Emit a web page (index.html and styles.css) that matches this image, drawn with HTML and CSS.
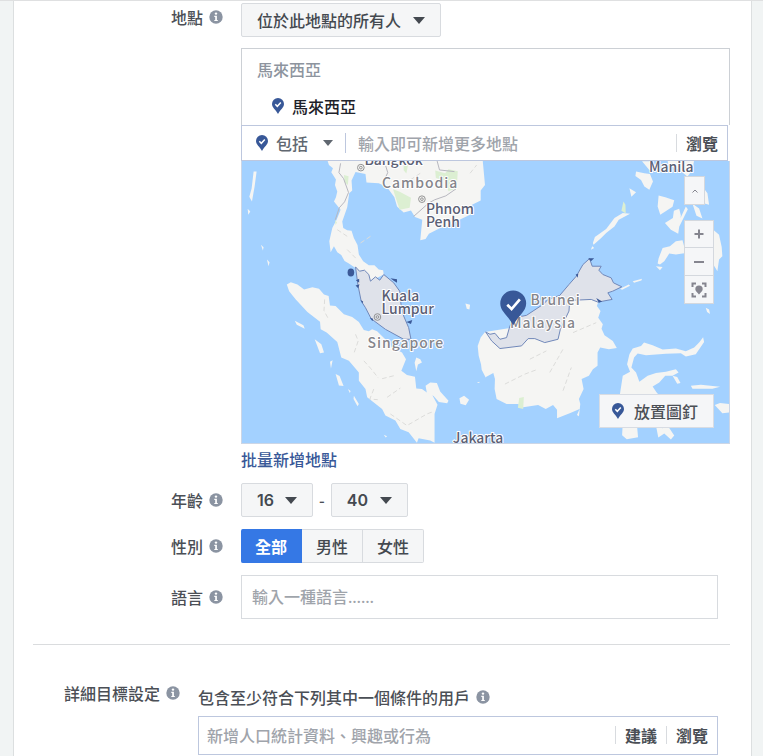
FILE: index.html
```html
<!DOCTYPE html>
<html lang="zh-Hant">
<head>
<meta charset="utf-8">
<meta name="viewport" content="width=device-width, initial-scale=1">
<title>廣告受眾</title>
<link rel="stylesheet" href="styles.css">
</head>
<body>
<svg class="defs" aria-hidden="true">
  <symbol id="info" viewBox="0 0 14 14">
    <circle cx="7" cy="7" r="6.7" fill="#8b94a2"/>
    <circle cx="7" cy="3.6" r="1.2" fill="#fff"/>
    <path d="M5.3 5.8h2.6v4.1h.9v1.2H5.3V9.900h.9V7h-.9z" fill="#fff"/>
  </symbol>
  <symbol id="pin" viewBox="0 0 12 16">
    <path d="M6 0a6 6 0 0 1 6 6c0 3.500-3.600 5.500-6 10C3.600 11.500 0 9.500 0 6a6 6 0 0 1 6-6z" fill="#385898"/>
    <path d="M3.300 6.300l2 2 3.500-3.800" fill="none" stroke="#fff" stroke-width="1.500"/>
  </symbol>
</svg>
<main class="panel">
  <form>
    <div class="row row-location">
      <label class="label" for="who">地點 <svg class="info"><use href="#info"/></svg></label>
      <div class="control">
        <span class="select"><select id="who"><option>位於此地點的所有人</option></select></span>
        <section class="picker">
          <div class="places">
            <h2>馬來西亞</h2>
            <p><svg class="pin"><use href="#pin"/></svg>馬來西亞</p>
          </div>
          <div class="search search-place">
            <svg class="pin"><use href="#pin"/></svg>
            <span class="select-plain"><select aria-label="包括或排除"><option>包括</option></select></span>
            <input type="text" aria-label="新增地點" placeholder="輸入即可新增更多地點">
            <button type="button">瀏覽</button>
          </div>
          <div class="map">
            <svg class="canvas" viewBox="3 3 1467 849" preserveAspectRatio="xMidYMid slice" role="img" aria-label="地圖">
              <path class="sea" d="M0 0h1480v860H0z"/>
              <g class="land">
                <path d="M260 0L265 15 277 25 272 37 286 59 283 75 290 95 286 112 280 125 300 150 288 180 275 205 266 245 270 278 280 260 290 278 302 286 312 304 325 312 345 325 357 337 390 365 430 345 428 332 415 330 402 317 385 317 368 305 355 285 351 256 340 235 333 213 320 212 308 205 305 185 320 142 326 100 335 92 333 62 345 36 375 42 378 68 415 70 440 82 462 112 470 140 490 158 512 152 524 172 546 180 540 242 556 238 566 222 600 205 625 200 650 184 690 165 696 135 722 122 722 92 735 75 728 0z"/>
                <path d="M138 375L150 368 170 375 190 390 215 383 235 388 250 405 264 410 268 438 285 440 310 465 335 473 355 488 370 512 385 516 395 510 410 516 440 545 455 565 485 580 497 600 483 635 500 648 524 653 528 688 545 690 560 700 575 706 592 737 583 765 583 852 570 845 535 838 530 852 505 820 480 810 465 785 435 770 425 750 380 715 375 690 355 665 355 640 325 605 302 595 290 548 258 520 240 510 238 487 200 458 165 420 145 395z"/>
                <path d="M735 518L722 535 713 560 716 590 723 615 725 632 737 655 735 655 760 642 765 660 764 690 770 720 800 735 835 735 850 745 895 738 918 750 940 738 952 752 952 778 992 762 1020 750 1012 768 1018 772 1022 735 1018 720 1032 690 1026 660 1048 650 1060 630 1074 620 1074 580 1082 565 1108 570 1132 566 1120 545 1095 528 1086 508 1090 495 1076 475 1083 455 1072 440 1076 428 1050 380 980 420 850 500z"/>
                <path d="M1170 585L1180 568 1205 560 1214 550 1240 558 1270 571 1310 568 1340 576 1365 565 1380 550 1392 534 1395 548 1370 585 1340 592 1325 582 1280 584 1220 588 1195 583 1184 595 1176 625 1190 640 1200 668 1225 650 1250 642 1280 638 1310 630 1318 640 1300 650 1278 650 1260 670 1240 682 1252 700 1265 715 1240 725 1140 715 1150 650 1172 638 1163 615z"/>
                <path d="M1150 790h42l4 45-34 6-14-12zM1250 800l20 8 15-8 20 30-10 12-20-18-18 12zM1355 680l30-3 58 6-23 6-60 0zM1427 738l16-6 35 4v24l-28 3zM1300 650l14 4 10 18-10 2zM1400 445l10 5 3 14-9-6z"/>
                <path d="M1190 35L1215 40 1232 42 1241 65 1230 90 1215 80 1205 60 1188 48zM1208 4h30l8 20-16 6zM1285 0h80l-5 30-15 20-28-22-30-12zM1258 107l20 5 27 9-5 20-22 14-15 10-8-25zM1304 153l16-6 5 20-8 55-22-12-18-20 24-15zM1340 140l6 8-32 65-5-6zM1360 132l20 14 10 30-18-8zM1390 80l15 20 5 35-14-4z"/>
                <path d="M1258 296L1270 265 1292 260 1310 245 1330 242 1340 280 1310 285 1290 282 1275 305 1262 315 1255 312zM1420 208L1440 225 1448 262 1450 290 1440 300 1435 335 1420 310zM1060 250L1066 232 1100 208 1125 175 1150 160 1172 162 1138 180 1125 200 1100 220 1085 235 1062 255zM1170 85l20 12-14 14zM1180 365l28-7-2 5-22 7zM1142 388l26-13 4 4-24 12zM1250 320l20 2-8 10zM1054 270l4-10 6 5z"/>
                <path d="M38 35h9l-6 45-8 45-8-14 7-25zM20 147l8 8-6 10zM60 255l8 8-2 10zM78 300l8 8-3 12zM162 484l26 14 4 10-24-12zM222 540l20 15 8 25-12 2zM285 645l12 6 12 30-14-2zM322 690l8 6-2 6zM340 710l15 25-4 7-12-22zM276 603l-5 25-3-20zM556 680l14-10 20 2 10 25 25 28-4 8-25-4-16-18-20-8zM658 718l14-8 15 12-10 17-16-5zM528 595l12 5 5 10-12 6-5 20-5-25zM430 828l10 4-4 4zM676 432l14 4-2 14-8-2zM710 672l8-4v4z"/>
              </g>
              <path class="forest" d="M310 45l14 4-2 26-10-8zM458 88l20 8 34 18-4 30-30 6-10-30zM585 32l30 8 10-12 28 6-3 50-25 10-10-32-28-8zM490 6l14 5-6 30-8-10zM838 717l14-3-2 36-16-4zM1152 125l6 10 1 26-13-8zM283 180l6 8-4 8z"/>
              <path class="route" d="M300 10l-5 28 14 18 15 42-12 28-16 18-12 36M430 64l12-26-6-20M590 0l8 30 45 5M520 170l45-40 18-10 34-12 32-22"/>
              <path class="trail" d="M252 420l-2 34 12 22M345 525l8 20-12 35M370 605l20 22 24 30M460 650l-40 10M400 690l-12 30 24 2M440 715l40-28M450 765l50 35 60-35 22-8M795 675l60-30 40-15M870 600l50-25M930 640l40-70M970 695l25-70M1000 520l70-30M390 230l-30 20M290 210l30 20M320 270l30 30M510 60l30-20M690 40l20-25"/>
              <path class="region" d="M345 322L357 335 372 332 385 345 390 365 405 352 418 362 430 345 460 370 478 395 482 435 490 470 505 505 512 540 490 540 435 510 392 478 375 445 362 425 352 375z"/>
              <path class="region" d="M737 518L750 525 765 522 780 540 800 535 810 500 825 475 860 468 910 435 925 420 960 408 988 375 1010 350 1030 315 1050 297 1058 320 1085 320 1078 332 1090 345 1115 355 1122 370 1147 382 1120 395 1105 400 1118 420 1075 428 1055 420 990 423 988 455 962 510 955 540 915 550 885 538 865 538 845 560 780 568 755 545z"/>
              <g class="islet"><ellipse cx="331" cy="339" rx="10" ry="12"/><path d="M346 362l10-4v12zM345 378l12-4-4 12zM450 356l20 3v11l-10-6zM388 475l10 3-2 8zM498 488l18-6-4 12zM360 422l8 4-2 6zM1070 416l18 10-10 4zM1008 345l8-2-2 12zM1046 296l18 0-10 9z"/></g>
              <g class="town"><circle cx="361" cy="23" r="10"/><circle cx="361" cy="23" r="4"/><circle cx="545" cy="118" r="10"/><circle cx="545" cy="118" r="4"/><circle cx="411" cy="473" r="10"/><circle cx="411" cy="473" r="4"/></g>
              <g class="city">
                <text x="372" y="15">Bangkok</text>
                <text x="557" y="164">Phnom</text><text x="557" y="203">Penh</text>
                <text x="423" y="424">Kuala</text><text x="423" y="464">Lumpur</text>
                <text x="1229" y="36">Manila</text><text x="638" y="852">Jakarta</text>
              </g>
              <g class="country">
                <text x="425" y="84">Cambodia</text><text x="381" y="565">Singapore</text>
                <text x="872" y="436">Brunei</text><text x="810" y="505">Malaysia</text>
              </g>
              <path class="marker" d="M820 393a39 39 0 0 1 39 39c0 24-24 36-39 66-15-30-39-42-39-66a39 39 0 0 1 39-39z"/>
              <path class="tick" d="M802 436l13 13 25-29"/>
            </svg>
            <div class="tools">
              <button class="tilt" type="button" aria-label="向上"><svg viewBox="0 0 18 18"><path d="M6.500 10.500L9 8l2.500 2.500"/></svg></button>
              <div class="zoom">
                <button type="button" aria-label="放大"><svg viewBox="0 0 18 18"><path class="bold" d="M9 4.500v9M4.500 9h9"/></svg></button>
                <button type="button" aria-label="縮小"><svg viewBox="0 0 18 18"><path class="bold" d="M4 9h10"/></svg></button>
                <button type="button" aria-label="置中"><svg viewBox="0 0 18 18"><path class="frame" d="M2.500 6V2.500H6M12 2.500h3.500V6M15.500 12v3.500H12M6 15.500H2.500V12"/><path class="solid" d="M9 4.500a3.700 3.700 0 0 1 3.700 3.700c0 2-2 3-3.700 5.300-1.700-2.300-3.700-3.300-3.700-5.300A3.700 3.700 0 0 1 9 4.500z"/></svg></button>
              </div>
            </div>
            <button class="drop" type="button"><svg class="pin"><use href="#pin"/></svg>放置圖釘</button>
          </div>
        </section>
        <a class="bulk" href="#bulk">批量新增地點</a>
      </div>
    </div>
    <div class="row">
      <label class="label" for="age-min">年齡 <svg class="info"><use href="#info"/></svg></label>
      <div class="control ages">
        <span class="select"><select id="age-min"><option>16</option></select></span>
        <span>-</span>
        <span class="select"><select aria-label="最高年齡"><option>40</option></select></span>
      </div>
    </div>
    <div class="row">
      <span class="label" id="gender">性別 <svg class="info"><use href="#info"/></svg></span>
      <div class="control segments" role="group" aria-labelledby="gender">
        <button class="on" type="button" aria-pressed="true">全部</button><button type="button">男性</button><button type="button">女性</button>
      </div>
    </div>
    <div class="row">
      <label class="label" for="lang">語言 <svg class="info"><use href="#info"/></svg></label>
      <div class="control"><input class="language" id="lang" type="text" placeholder="輸入一種語言……"></div>
    </div>
    <hr>
    <div class="row row-detail">
      <label class="label" for="detail">詳細目標設定 <svg class="info"><use href="#info"/></svg></label>
      <div class="control">
        <p class="hint">包含至少符合下列其中一個條件的用戶 <svg class="info"><use href="#info"/></svg></p>
        <div class="search search-detail">
          <input id="detail" type="text" placeholder="新增人口統計資料、興趣或行為">
          <button type="button">建議</button>
          <button type="button">瀏覽</button>
        </div>
      </div>
    </div>
  </form>
</main>
</body>
</html>
```
FILE: styles.css
```css
* { box-sizing: border-box; }
body {
  margin: 0;
  min-height: 100vh;
  display: flex;
  background: #f1f4f4;
  border-top: 1px solid #dfe0e1;
  padding: 0 11px 0 13px;
  color: #4b4f56;
  font: 500 16px/24px "Noto Sans CJK TC", sans-serif;
}
button, input, select { font: inherit; color: inherit; margin: 0; border-radius: 0; }
button { cursor: pointer; }
h2, p { margin: 0; font: inherit; }
.defs { position: absolute; width: 0; height: 0; }
.panel {
  flex: 1;
  min-width: 0;
  background: #fff;
  border: solid #dcdfe0;
  border-width: 0 1px;
  padding: 2px 21px 0 19px;
}
.row {
  display: grid;
  grid-template-columns: 190px minmax(0, 1fr);
  column-gap: 18px;
  align-items: center;
  margin-bottom: 12px;
}
.row-location { align-items: start; }
.row-location .label { padding-top: 2px; }
.label, .hint { display: flex; align-items: center; gap: 6px; }
.label { justify-content: flex-end; }
.info { width: 14px; height: 14px; flex: none; }
.pin { width: 12px; height: 16px; flex: none; }

.select { position: relative; display: inline-flex; height: 34px; }
.select select {
  appearance: none;
  height: 34px;
  padding: 0 38px 0 15px;
  border: 1px solid #d8dbdf;
  border-radius: 2px;
  background: #f5f6f7;
  color: #444950;
}
.select::after, .select-plain::after {
  content: "";
  position: absolute;
  right: 16px;
  top: 14px;
  border: solid transparent;
  border-width: 7px 6px 0;
  border-top-color: #444950;
  pointer-events: none;
}

.picker { margin-top: 11px; }
.places { height: 77px; border: 1px solid #ccd0d5; border-bottom: 0; padding: 8px 15px 0; color: #8d949e; }
.places p { display: flex; align-items: center; gap: 8px; margin-top: 13px; padding-left: 15px; color: #1d2129; }
.search { display: flex; align-items: center; border: 1px solid #bdc7de; background: #fff; }
.search input { flex: 1; min-width: 0; border: 0; padding: 0; outline: 0; background: none; }
.search button {
  height: 18px;
  border: 0;
  border-left: 1px solid #d8dbdf;
  background: none;
  padding: 0 9px;
  font-weight: 700;
  line-height: 18px;
}
::placeholder { color: #9fa4ab; opacity: 1; }
.search-place { height: 36px; margin-right: 2px; padding-left: 14px; }
.search-place input { padding-left: 12px; }
.select-plain { position: relative; margin-left: 8px; border-right: 1px solid #bdc7de; height: 20px; }
.select-plain select { appearance: none; display: block; border: 0; background: none; height: 20px; padding: 0 36px 0 0; line-height: 20px; color: #606770; }
.select-plain::after { right: 12px; top: 7px; border-width: 6px 5px 0; border-top-color: #606770; }

.map { position: relative; border: 1px solid #ccd6e6; border-top: 0; }
.canvas { display: block; width: 100%; height: auto; aspect-ratio: 489 / 283; }
.sea { fill: #a3d1ff; }
.land { fill: #f5f5f3; }
.forest { fill: #dcefd2; }
.route, .trail { fill: none; stroke: #b6b6be; stroke-width: 3; }
.trail { stroke: #dcdcda; stroke-dasharray: 14 8; }
.region { fill: #dfe2ea; stroke: #7087b8; stroke-width: 3; }
.islet { fill: #3b5998; }
.town { fill: none; stroke: #929292; stroke-width: 3; }
.city, .country { paint-order: stroke; stroke: #fff; stroke-width: 6; stroke-linejoin: round; fill: #5b6075; font-size: 42px; }
.country { fill: #85858b; letter-spacing: 3px; }
.marker { fill: #385898; }
.tick { fill: none; stroke: #fff; stroke-width: 8; }
.tools { position: absolute; top: 15px; right: 15px; }
.tools button {
  display: grid;
  place-items: center;
  width: 30px;
  height: 28px;
  padding: 0;
  border: 1px solid #d4d8de;
  background: #f5f6f8;
}
.tools .tilt { width: 21px; height: 29px; margin-bottom: 15px; }
.tools .zoom button + button { border-top: 0; }
.tools svg { width: 18px; height: 18px; fill: none; stroke: #85858f; }
.tools .bold { stroke-width: 2; }
.tools .frame { stroke-width: 2; }
.tools .solid { fill: #85858f; stroke: none; }
.drop {
  position: absolute;
  right: 15px;
  bottom: 15px;
  display: flex;
  align-items: center;
  gap: 10px;
  height: 34px;
  padding: 0 15px 0 12px;
  border: 1px solid #d8dce3;
  background: #f5f6f8;
}
.bulk { display: block; margin-top: 3px; color: #385898; text-decoration: none; }
.ages { display: flex; align-items: center; gap: 6px; }
.ages select { font-family: Inter, sans-serif; font-weight: 600; }
.segments { display: flex; }
.segments button {
  height: 34px;
  padding: 0 14px;
  border: 1px solid #d8dbdf;
  border-left: 0;
  background: #f5f6f7;
  color: #444950;
}
.segments button:last-child { border-radius: 0 2px 2px 0; }
.segments .on { border-color: #3578e5; background: #3578e5; color: #fff; font-weight: 700; border-radius: 2px 0 0 2px; }
.language {
  display: block;
  width: calc(100% - 12px);
  height: 44px;
  border: 1px solid #d8dbdf;
  padding: 0 10px;
  font-family: "Noto Sans", "Noto Sans CJK TC", sans-serif;
}
hr { margin: 25px 0 36px; border: 0; border-top: 1px solid #dadcde; }
.row-detail { grid-template-columns: 147px minmax(0, 1fr); align-items: start; margin-bottom: 0; }
.hint { margin: 4px 0 7px; }
.search-detail { height: 39px; margin-right: 12px; padding-left: 8px; }
```
